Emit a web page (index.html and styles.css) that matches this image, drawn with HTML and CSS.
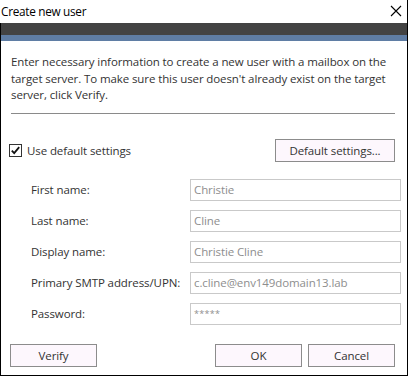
FILE: index.html
```html
<!DOCTYPE html>
<html>
<head>
<meta charset="utf-8">
<link rel="stylesheet" href="styles.css">
</head>
<body>
<div class="window">
  <div class="titlebar">
    <span class="title">Create new user</span>
    <svg class="close" width="12" height="12" viewBox="0 0 12 12"><path d="M1 1L11 11M11 1L1 11" stroke="#000" stroke-width="1.1" fill="none"/></svg>
  </div>
  <div class="frame">
    <div class="darkbar"></div>
    <div class="accent"></div>
    <p class="desc">Enter necessary information to create a new user with a mailbox on the target server. To make sure this user doesn't already exist on the target server, click Verify.</p>
    <div class="sep"></div>
    <div class="options">
      <label class="check">
        <svg class="box" width="13" height="13" viewBox="0 0 13 13"><rect x="0.5" y="0.5" width="12" height="12" fill="#fff" stroke="#333"/><path d="M2.8 6.6L5.2 9.2L10.2 3.2" stroke="#111" stroke-width="1.8" fill="none"/></svg>
        <span>Use default settings</span>
      </label>
      <button class="btn wide">Default settings...</button>
    </div>
    <div class="form">
      <div class="row"><span class="lbl">First name:</span><div class="inp">Christie</div></div>
      <div class="row"><span class="lbl">Last name:</span><div class="inp">Cline</div></div>
      <div class="row"><span class="lbl">Display name:</span><div class="inp">Christie Cline</div></div>
      <div class="row"><span class="lbl">Primary SMTP address/UPN:</span><div class="inp">c.cline@env149domain13.lab</div></div>
      <div class="row"><span class="lbl">Password:</span><div class="inp pw">*****</div></div>
    </div>
    <div class="footer">
      <button class="btn">Verify</button>
      <div class="right">
        <button class="btn">OK</button>
        <button class="btn">Cancel</button>
      </div>
    </div>
  </div>
</div>
</body>
</html>
```
FILE: styles.css
```css
html, body { margin: 0; padding: 0; background: #fff; }
body { font-family: "Segoe UI", "Open Sans", "Liberation Sans", sans-serif; font-size: 11.5px; letter-spacing: -0.1px; color: #333; }
.window { width: 408px; height: 376px; box-sizing: border-box; display: flex; flex-direction: column; border-right: 1px solid #000; }
.titlebar { height: 23px; display: flex; align-items: center; justify-content: space-between; flex: none; }
.title { font-size: 11.8px; letter-spacing: -0.3px; color: #000; padding-left: 1px; margin-top: -1px; }
.close { margin-right: 5px; margin-top: -2px; }
.frame { flex: 1; display: flex; flex-direction: column; border-left: 1px solid #000; border-bottom: 1px solid #000; }
.darkbar { height: 12px; background: #434343; flex: none; }
.accent { height: 6px; background: #5f7da4; flex: none; }
.desc { margin: 13px 12px 0 10px; line-height: 16.5px; color: #333; }
.sep { margin: 9px 0 0 10px; width: 384px; height: 1px; background: #8a8a8a; }
.options { margin: 25px 12px 0 8px; display: flex; align-items: center; justify-content: space-between; height: 23px; }
.check { display: flex; align-items: center; gap: 5px; }
.box { display: block; }
.btn { font: inherit; letter-spacing: inherit; color: #333; background: #fdf7fd; border: 1px solid #8c8c8c; height: 23px; width: 87px; padding: 0; box-sizing: border-box; }
.btn.wide { width: 120px; }
.form { margin: 17px 6px 0 30px; display: flex; flex-direction: column; gap: 9px; }
.row { display: flex; align-items: center; height: 22px; }
.lbl { width: 159px; color: #333; }
.inp { width: 211px; height: 22px; box-sizing: border-box; border: 1px solid #c9c9c9; color: #8e8e8e; padding-left: 3px; display: flex; align-items: center; }
.inp.pw { font-size: 9px; letter-spacing: 0.3px; }
.footer { margin: auto 12px 8px 9px; display: flex; justify-content: space-between; }
.right { display: flex; gap: 6px; }
```
